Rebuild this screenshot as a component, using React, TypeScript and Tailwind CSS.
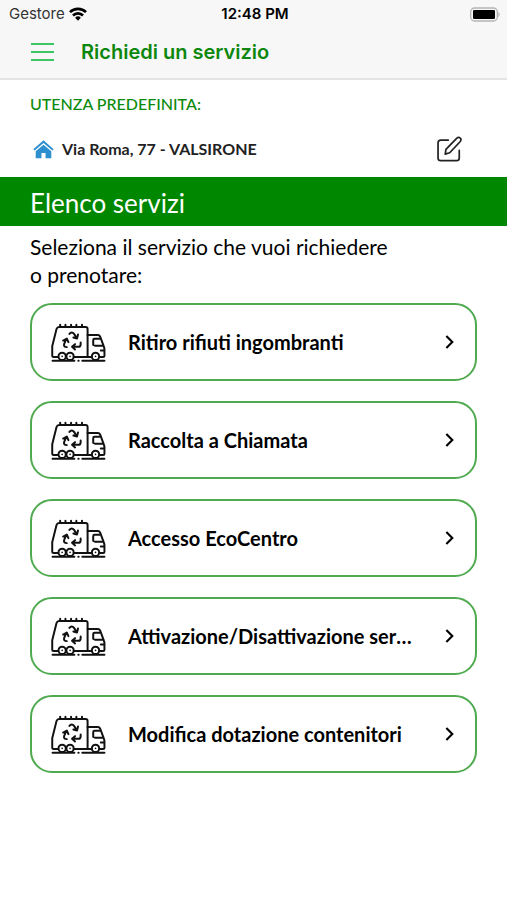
import React from 'react';

interface Service {
  id: number;
  title: string;
}

const SERVICES: Service[] = [
  { id: 1, title: 'Ritiro rifiuti ingombranti' },
  { id: 2, title: 'Raccolta a Chiamata' },
  { id: 3, title: 'Accesso EcoCentro' },
  { id: 4, title: 'Attivazione/Disattivazione servizi' },
  { id: 5, title: 'Modifica dotazione contenitori' },
];

const WifiIcon = () => (
  <svg viewBox="0 0 54 42" className="h-[14px] w-[18px]" aria-hidden="true">
    <g fill="none" stroke="#000" strokeWidth="8">
      <path d="M3 15.500A34 34 0 0 1 51 15.500" />
      <path d="M12 25.500A21 21 0 0 1 42 25.500" />
    </g>
    <path d="M18.500 32A12 12 0 0 1 35.500 32L27 41Z" />
  </svg>
);

const BatteryIcon = () => (
  <svg viewBox="0 0 93 45" className="h-[15px] w-[31px]" aria-hidden="true">
    <rect x="2" y="3" width="80" height="39" rx="12" fill="#f7f7f7" stroke="#b5b5b5" strokeWidth="4" />
    <rect x="9" y="9" width="66" height="27" rx="4" />
    <path d="M85 14Q93 22.500 85 31Z" fill="#b5b5b5" />
  </svg>
);

const HomeIcon = () => (
  <svg viewBox="0 0 62 56" className="h-[19px] w-[21px] shrink-0" fill="#2d8fd0" aria-hidden="true">
    <path d="M31 1L1 27L5 31L31 9L57 31L61 27Z" />
    <path d="M31 14L8 33V54H25V38H37V54H54V33Z" />
  </svg>
);

const EditIcon = () => (
  <svg
    viewBox="0 0 76 76"
    className="size-[26px]"
    fill="none"
    stroke="#222"
    strokeWidth="5"
    strokeLinecap="round"
    strokeLinejoin="round"
    aria-hidden="true"
  >
    <path d="M36 12H14Q6 12 6 20V64Q6 72 14 72H60Q68 72 68 64V42" />
    <path d="M27 53L29 39L61 6Q66 2 71 6Q75 11 71 16L40 49Z" />
  </svg>
);

const TruckIcon = () => (
  <svg
    viewBox="20 22 168 118"
    className="h-[39px] w-[56px] shrink-0"
    fill="none"
    stroke="#111"
    strokeWidth="6"
    strokeLinecap="round"
    strokeLinejoin="round"
    aria-hidden="true"
  >
    {/* cassone */}
    <path d="M41 125H27Q23 125 23 121V92L36 40Q38 34 44 34H124Q130 34 130 40V125H88" />
    <path d="M47 27V33M63 27V33M80 27V33M96 27V33M113 27V33" />
    {/* cabina */}
    <path d="M130 58H161Q166 58 168 63L179 93Q181 97 181 102V121Q181 125 177 125H166M130 125H142" />
    <path d="M166 70H151Q147 70 147 74V88L154 91H177M180 105H170" />
    {/* ruote */}
    <circle cx="53" cy="123" r="11" />
    <circle cx="77" cy="123" r="11" />
    <circle cx="154" cy="123" r="11" />
    <path strokeWidth="5" d="M53 123V123.100M77 123V123.100M154 123V123.100" />
    <path d="M24 136H90M102 136H103M114 136H181" />
    {/* frecce del riciclo */}
    <path d="M75 55Q82 46 89 55L96 66M87 66L98 69L101 57" />
    <path d="M67 95Q57 95 59 86L65 71M56 75L67 69L72 80" />
    <path d="M109 81V86Q109 94 102 94H84M92 86L83 94L92 102" />
  </svg>
);

const ChevronIcon = () => (
  <svg viewBox="0 0 24 40" className="h-[14px] w-[9px] shrink-0" fill="none" stroke="#000" strokeWidth="6" aria-hidden="true">
    <path d="M3 3L20 20L3 37" />
  </svg>
);

const ServiceCard: React.FC<{ service: Service }> = ({ service }) => (
  <button
    type="button"
    className="flex h-[78px] w-full items-center rounded-[22px] border-2 border-[#50ab50] bg-white pl-[19px] pr-[21px] text-left"
  >
    <TruckIcon />
    <span className="ml-[21px] mr-[30px] min-w-0 flex-1 truncate text-[20px] font-bold text-black">
      {service.title}
    </span>
    <ChevronIcon />
  </button>
);

export default function App() {
  return (
    <div className="min-h-screen bg-white font-['Lato',sans-serif] text-black">
      <header className="border-b-2 border-[#e4e4e4] bg-[#f7f7f7] font-['Inter',sans-serif]">
        <div className="grid h-7 grid-cols-3 items-center pl-[9px] pr-[6px] text-[15px]">
          <div className="flex items-center gap-1 text-[#333]">
            Gestore
            <WifiIcon />
          </div>
          <div className="whitespace-nowrap text-center font-semibold">12:48 PM</div>
          <div className="flex justify-end">
            <BatteryIcon />
          </div>
        </div>
        <div className="flex h-[50px] items-center gap-[27px] pb-[2px] pl-[31px]">
          <button type="button" aria-label="Menu" className="flex w-[23px] flex-col gap-[6px]">
            <span className="h-[2px] w-full bg-[#3dc566]" />
            <span className="h-[2px] w-full bg-[#3dc566]" />
            <span className="h-[2px] w-full bg-[#3dc566]" />
          </button>
          <h1 className="text-[20px] font-semibold text-[#0d870d]">Richiedi un servizio</h1>
        </div>
      </header>

      <section className="h-[97px] pl-[30px] pr-[45px] pt-3">
        <p className="text-[16px] font-medium leading-6 text-[#0b8a0b]">UTENZA PREDEFINITA:</p>
        <div className="mt-5 flex items-center">
          <div className="flex flex-1 items-center gap-2 pl-[3px]">
            <HomeIcon />
            <span className="text-[16px] font-bold text-[#222]">Via Roma, 77 - VALSIRONE</span>
          </div>
          <button type="button" aria-label="Modifica utenza">
            <EditIcon />
          </button>
        </div>
      </section>

      <h2 className="bg-[#008700] px-[30px] pb-[7px] pt-[10px] text-[26px] leading-8 text-white">Elenco servizi</h2>

      <main className="px-[30px] pt-[7px]">
        <p className="text-[21px] leading-7">
          Seleziona il servizio che vuoi richiedere
          <br />o prenotare:
        </p>
        <div className="mt-[14px] flex flex-col gap-5">
          {SERVICES.map((service) => (
            <ServiceCard key={service.id} service={service} />
          ))}
        </div>
      </main>
    </div>
  );
}
